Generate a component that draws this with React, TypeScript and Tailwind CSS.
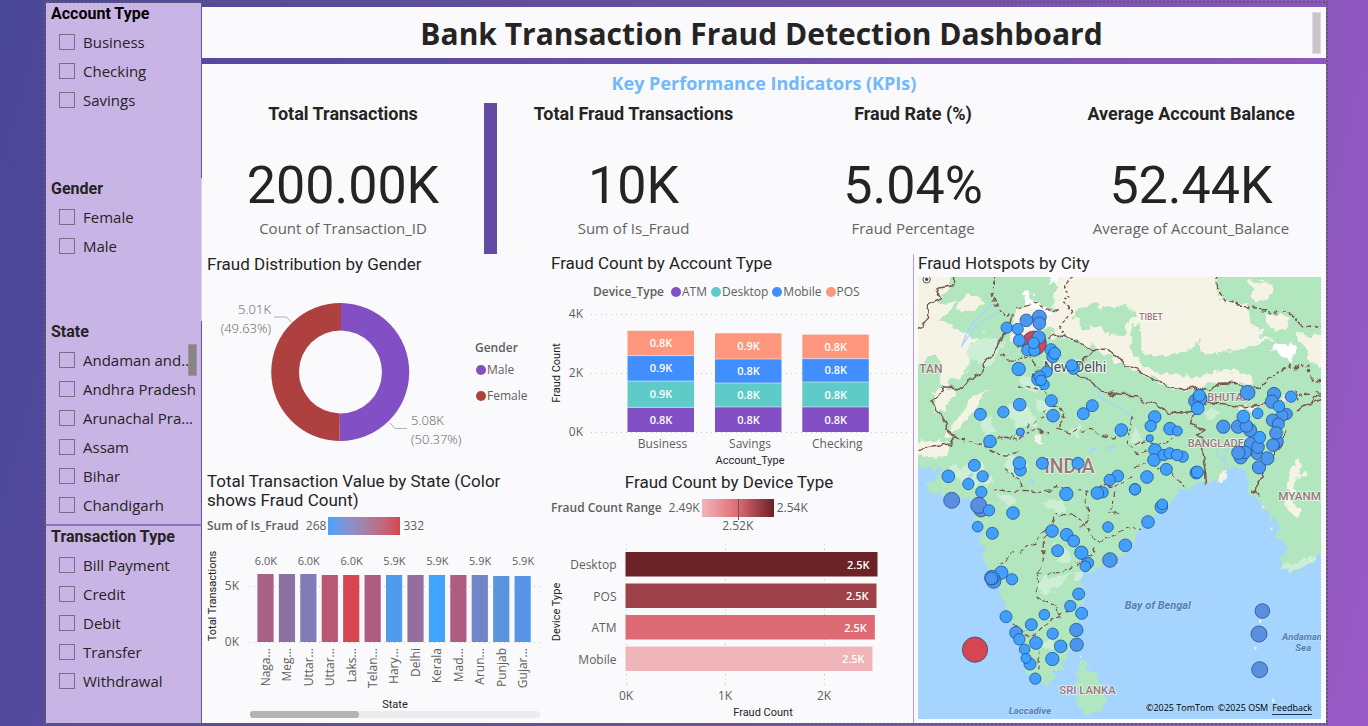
import React from "react";

const DIN = "font-[Roboto,'Liberation_Sans',sans-serif]";
const UI = "font-['Open_Sans','Noto_Sans',sans-serif]";

/* ---------- Slicers ---------- */

type SlicerProps = {
  title: string;
  items: string[];
  className: string;
  titleClass?: string;
  scrollbar?: boolean;
};

function Slicer({ title, items, className, titleClass = "text-[#252423]", scrollbar }: SlicerProps) {
  return (
    <fieldset className={`relative min-w-0 bg-[#c9b5e5] ${className}`}>
      <legend className={`float-left h-[21px] w-full pl-[5px] ${DIN} text-[16px] leading-[21px] font-bold ${titleClass}`}>
        {title}
      </legend>
      <ul className="clear-both pt-1">
        {items.map((item) => (
          <li key={item}>
            <label className="flex h-[29px] items-center gap-2 overflow-hidden pl-[13px] text-[15px] whitespace-nowrap text-[#252423]">
              <input
                type="checkbox"
                className="mb-[2px] size-4 shrink-0 appearance-none border border-[#7b6f87] checked:bg-[#5b4aa0]"
              />
              <span>{item}</span>
            </label>
          </li>
        ))}
      </ul>
      {scrollbar && <div className="absolute top-[23px] right-1 h-8 w-[9px] border border-[#9b949f] bg-[#888584]" />}
    </fieldset>
  );
}

function Sidebar() {
  return (
    <aside className="flex w-[156px] shrink-0 flex-col">
      <Slicer
        title="Account Type"
        titleClass="text-black"
        items={["Business", "Checking", "Savings"]}
        className="border-r border-[#6450a8] pb-[63px]"
      />
      <Slicer title="Gender" items={["Female", "Male"]} className="border-r border-[#d9cbee] pb-[60px]" />
      <Slicer
        title="State"
        items={["Andaman and...", "Andhra Pradesh", "Arunachal Pra...", "Assam", "Bihar", "Chandigarh"]}
        className="border-r border-[#6450a8] pb-1"
        scrollbar
      />
      <div className="h-[2px] bg-[#8b75c1]" />
      <Slicer
        title="Transaction Type"
        items={["Bill Payment", "Credit", "Debit", "Transfer", "Withdrawal"]}
        className="grow border-r border-[#6450a8]"
      />
    </aside>
  );
}

/* ---------- KPI cards ---------- */

function Kpi({ title, value, caption }: { title: string; value: string; caption: string }) {
  return (
    <section className="flex min-w-0 flex-col items-center bg-[#fafafd] text-center">
      <h3 className={`${DIN} text-[18px] leading-[22px] font-bold text-[#252423]`}>{title}</h3>
      <p className={`mt-[30px] ${DIN} text-[52px] leading-[62px] text-[#252423]`}>{value}</p>
      <p className="text-[15px] leading-[22px] text-[#666361]">{caption}</p>
    </section>
  );
}

/* ---------- Shared chart parts ---------- */

function ChartTitle({ children, className = "" }: { children: React.ReactNode; className?: string }) {
  return <h3 className={`${DIN} text-[17px] leading-[19px] text-[#252423] ${className}`}>{children}</h3>;
}

function Key({ color, label }: { color: string; label: string }) {
  return (
    <li className="flex items-center gap-px">
      <svg viewBox="0 0 10 10" className="size-[10px]">
        <circle cx="5" cy="5" r="5" fill={color} />
      </svg>
      {label}
    </li>
  );
}

/* ---------- Donut ---------- */

function GenderChart() {
  return (
    <section className="min-w-0 bg-[#fafafd] pt-[1px] pl-[5px]">
      <ChartTitle>Fraud Distribution by Gender</ChartTitle>
      <div className="flex">
        <svg viewBox="207 274 264 190" className="w-0 grow">
          <path d="M341 303 A69 69 0 1 1 339.4 441 L339.9 413.5 A41.5 41.5 0 1 0 341 330.5Z" fill="#8250c4" />
          <path d="M341 303 A69 69 0 0 0 339.4 441 L339.9 413.5 A41.5 41.5 0 0 1 341 330.5Z" fill="#ae4140" />
          <path d="M274 317 H286.500 L291 322 M390 423 L395 428.500 H407" fill="none" stroke="#b3b0ad" />
          <g className="fill-[#605e5c] text-[13px] font-light">
            <text x="271" y="314" textAnchor="end">5.01K</text>
            <text x="271" y="333" textAnchor="end">(49.63%)</text>
            <text x="411" y="425">5.08K</text>
            <text x="411" y="444">(50.37%)</text>
          </g>
        </svg>
        <div className="w-[75px] shrink-0 pt-[65px] pl-1 text-[12px] leading-[18px] text-[#605e5c]">
          <p className="font-semibold">Gender</p>
          <ul className="mt-1 flex flex-col gap-2 pl-[1px]">
            <Key color="#8250c4" label="Male" />
            <Key color="#ae4140" label="Female" />
          </ul>
        </div>
      </div>
    </section>
  );
}

/* ---------- State columns ---------- */

const states = [
  { name: "Naga...", color: "#a96085", top: 574, label: "6.0K" },
  { name: "Meg...", color: "#8d70a2", top: 574 },
  { name: "Uttar...", color: "#7f7cb6", top: 574, label: "6.0K" },
  { name: "Uttar...", color: "#b95873", top: 575 },
  { name: "Laks...", color: "#d64550", top: 575, label: "6.0K" },
  { name: "Telan...", color: "#ad5e80", top: 575 },
  { name: "Hary...", color: "#4f9bef", top: 575, label: "5.9K" },
  { name: "Delhi", color: "#966d9f", top: 575 },
  { name: "Kerala", color: "#41a4ff", top: 575, label: "5.9K" },
  { name: "Mad...", color: "#ad5e80", top: 575 },
  { name: "Arun...", color: "#7185c9", top: 575, label: "5.9K" },
  { name: "Punjab", color: "#5b93e0", top: 576 },
  { name: "Gujar...", color: "#5796e6", top: 576, label: "5.9K" },
];

function StateChart() {
  return (
    <section className="min-w-0 bg-[#fafafd] pt-[2px] pl-[5px]">
      <ChartTitle className="max-w-[300px]">Total Transaction Value by State (Color shows Fraud Count)</ChartTitle>
      <div className="mt-[7px] flex h-[18px] items-center text-[12px] text-[#605e5c]">
        <span className="mr-[7px] font-semibold">Sum of Is_Fraud</span>
        <span className="mr-[2px]">268</span>
        <span className="h-[18px] w-[72px] bg-linear-to-r from-[#41a4ff] to-[#d64550]" />
        <span className="ml-[3px]">332</span>
      </div>
      <svg viewBox="207 540 339 182" className="mt-[5px] w-full">
        <path d="M249 586.5 H541 M249 642.5 H541" stroke="#c8c6c4" strokeDasharray="1 4" />
        {states.map((s, i) => {
          const x = 257.4 + i * 21.43;
          return (
            <g key={i}>
              <rect x={x} y={s.top} width="16.2" height={642 - s.top} fill={s.color} />
              {s.label && (
                <text x={x + 8.5} y="565" textAnchor="middle" className="fill-[#605e5c] text-[11px]">{s.label}</text>
              )}
              <text transform={`translate(${x + 12.5} 648) rotate(-90)`} textAnchor="end" className="fill-[#605e5c] text-[12px]">
                {s.name}
              </text>
            </g>
          );
        })}
        <g className="fill-[#605e5c] text-[12px]">
          <text x="239" y="590" textAnchor="end">5K</text>
          <text x="239" y="646" textAnchor="end">0K</text>
        </g>
        <g className={`${DIN} fill-[#252423] text-[11px]`} textAnchor="middle">
          <text transform="translate(216 596) rotate(-90)">Total Transactions</text>
          <text x="395" y="708">State</text>
        </g>
        <rect x="250" y="711" width="290" height="7" rx="3" fill="#ececee" />
        <rect x="250" y="711" width="109" height="7" rx="3" fill="#b3b3b3" />
      </svg>
    </section>
  );
}

/* ---------- Account type stacked columns ---------- */

const deviceColors = ["#ff977e", "#418fff", "#5ecbc8", "#8250c4"];
const accounts = [
  { name: "Business", x: 627.5, edges: [330.5, 355.6, 381, 407.4, 432], labels: ["0.8K", "0.9K", "0.9K", "0.8K"] },
  { name: "Savings", x: 715, edges: [333, 359, 383, 407, 432], labels: ["0.9K", "0.8K", "0.8K", "0.8K"] },
  { name: "Checking", x: 802.3, edges: [334.3, 358.7, 382, 407, 432], labels: ["0.8K", "0.8K", "0.8K", "0.8K"] },
];

function AccountChart() {
  return (
    <section className="min-w-0 bg-[#fafafd] pl-[5px]">
      <ChartTitle>Fraud Count by Account Type</ChartTitle>
      <div className="mt-[10px] flex h-[18px] items-center pl-[42px] text-[12px] text-[#605e5c]">
        <span className="mr-[7px] font-semibold">Device_Type</span>
        <ul className="flex gap-1">
          <Key color="#8250c4" label="ATM" />
          <Key color="#5ecbc8" label="Desktop" />
          <Key color="#418fff" label="Mobile" />
          <Key color="#ff977e" label="POS" />
        </ul>
      </div>
      <svg viewBox="551 301 362 168" className="w-full">
        <path d="M591 314.500 H909 M591 373.500 H909 M591 432.500 H909" stroke="#c8c6c4" strokeDasharray="1 4" />
        {accounts.map((a) => (
          <g key={a.name} textAnchor="middle">
            {a.labels.map((label, i) => (
              <g key={i}>
                <rect x={a.x} y={a.edges[i]} width="66.5" height={a.edges[i + 1] - a.edges[i]} fill={deviceColors[i]} />
                <path d={`M${a.x} ${a.edges[i]} h66.500`} stroke="#ffffff" strokeOpacity="0.5" />
                <text x={a.x + 33.5} y={(a.edges[i] + a.edges[i + 1]) / 2 + 4} className="fill-white text-[11px] font-semibold">
                  {label}
                </text>
              </g>
            ))}
            <text x={a.x + 35} y="448" className="fill-[#605e5c] text-[12px]">{a.name}</text>
          </g>
        ))}
        <g className="fill-[#605e5c] text-[12px]" textAnchor="end">
          <text x="583" y="318">4K</text>
          <text x="583" y="377">2K</text>
          <text x="583" y="436">0K</text>
        </g>
        <g className={`${DIN} fill-[#252423] text-[11px]`} textAnchor="middle">
          <text transform="translate(560 373) rotate(-90)">Fraud Count</text>
          <text x="750" y="464">Account_Type</text>
        </g>
      </svg>
    </section>
  );
}

/* ---------- Device type bars ---------- */

const devices = [
  { name: "Desktop", y: 552, w: 252, color: "#6b2328" },
  { name: "POS", y: 583.5, w: 251, color: "#9d4249" },
  { name: "ATM", y: 615, w: 249.3, color: "#de6a73" },
  { name: "Mobile", y: 646.5, w: 247, color: "#efb5b9" },
];

function DeviceChart() {
  return (
    <section className="min-w-0 bg-[#fafafd] pt-[3px] pl-[5px]">
      <ChartTitle className="pr-[6px] text-center">Fraud Count by Device Type</ChartTitle>
      <div className="mt-[7px] flex h-[18px] items-center text-[12px] text-[#605e5c]">
        <span className="mr-[7px] font-semibold">Fraud Count Range</span>
        <span className="mr-[2px]">2.49K</span>
        <span className="relative h-[18px] w-[72px] bg-linear-to-r from-[#efb5b9] via-[#de6a73] to-[#6b2328]">
          <span className="absolute top-0 left-1/2 h-[21px] w-px bg-[#605e5c]" />
          <span className="absolute top-[18px] left-1/2 -translate-x-1/2 leading-[18px]">2.52K</span>
        </span>
        <span className="ml-[3px]">2.54K</span>
      </div>
      <svg viewBox="551 517 362 203" className="w-full">
        <path d="M626.500 544 V686 M725.500 544 V686 M824.500 544 V686" stroke="#c8c6c4" strokeDasharray="1 4" />
        {devices.map((d) => (
          <g key={d.name} textAnchor="end">
            <rect x="625.500" y={d.y} width={d.w} height="24.500" fill={d.color} />
            <text x={d.w + 617.5} y={d.y + 16.5} className="fill-white text-[11px] font-semibold">2.5K</text>
            <text x="616.500" y={d.y + 17} className="fill-[#605e5c] text-[12px]">{d.name}</text>
          </g>
        ))}
        <g className="fill-[#605e5c] text-[12px]" textAnchor="middle">
          <text x="626" y="700">0K</text>
          <text x="725" y="700">1K</text>
          <text x="824" y="700">2K</text>
        </g>
        <g className={`${DIN} fill-[#252423] text-[11px]`} textAnchor="middle">
          <text transform="translate(560 612) rotate(-90)">Device Type</text>
          <text x="763" y="716">Fraud Count</text>
        </g>
      </svg>
    </section>
  );
}

/* ---------- Map ---------- */

type Bubble = [x: number, y: number, r: number, tone?: 1 | 2 | 3];
const tones = ["#419fff", "#4b96ee", "#5a8fe0", "#d64550"];

const northWest: Bubble[] = [
  [366, 280, 38, 3], [382, 201, 22, 1], [343, 211, 20, 1], [382, 220, 20, 1], [284, 233, 18], [317, 237, 18],
  [322, 271, 19], [380, 262, 21, 1], [347, 300, 19], [367, 302, 18], [365, 279, 18], [417, 299, 19], [422, 320, 19],
  [428, 310, 19], [484, 355, 19], [479, 346, 18], [320, 357, 21], [404, 365, 18], [378, 388, 20], [383, 380, 18],
  [397, 404, 16], [387, 391, 17], [323, 464, 20], [274, 486, 18], [205, 493, 19], [418, 452, 19], [423, 497, 20],
  [514, 491, 19], [541, 467, 19], [325, 546, 13], [234, 574, 20], [628, 540, 20], [187, 646, 19], [212, 679, 18],
  [109, 679, 20], [169, 702, 18], [325, 660, 19], [322, 639, 20], [391, 640, 19], [498, 640, 19], [617, 678, 19],
  [593, 690, 18],
];

const northEast: Bubble[] = [
  [182, 453, 22, 1], [195, 446, 22, 1], [193, 436, 19], [188, 475, 20], [338, 428, 23, 1], [417, 432, 21, 1],
  [411, 455, 21, 1], [468, 440, 18], [455, 492, 18, 1], [441, 497, 19, 1], [432, 469, 18], [368, 490, 17],
  [413, 511, 20, 1], [430, 522, 19, 1], [265, 530, 21, 1], [309, 530, 21, 1], [345, 540, 21, 1], [334, 528, 20, 1],
  [325, 500, 20], [428, 574, 18, 1], [423, 549, 20, 1], [414, 585, 20, 1], [348, 582, 21, 1], [366, 612, 18, 1],
  [369, 591, 20, 1], [374, 562, 19], [317, 622, 21, 1], [330, 607, 20, 1], [310, 608, 21, 1], [372, 652, 21, 1],
  [397, 625, 21, 1], [59, 501, 20], [47, 528, 18], [105, 536, 20], [127, 543, 16], [44, 565, 12], [60, 600, 20],
  [57, 630, 20], [86, 615, 18], [104, 610, 18], [143, 620, 18], [126, 615, 18], [94, 658, 19], [36, 681, 20],
  [184, 668, 20], [187, 666, 19], [0, 718, 18],
];

const southWest: Bubble[] = [
  [208, 21, 18], [119, 46, 25, 2], [207, 75, 22, 2], [200, 61, 25, 2], [231, 76, 18], [303, 84, 20], [197, 125, 17],
  [241, 145, 19], [463, 27, 21], [572, 22, 18], [556, 24, 20], [669, 13, 18], [420, 138, 20], [464, 149, 20],
  [485, 168, 19], [437, 197, 19], [508, 203, 21], [528, 234, 18], [520, 244, 17], [594, 225, 23, 1], [588, 126, 17],
  [640, 181, 20], [268, 263, 21], [245, 288, 23, 1], [240, 278, 23, 1], [238, 280, 20, 1], [300, 283, 18],
  [282, 395, 19], [500, 327, 19], [475, 363, 18], [509, 385, 19], [397, 389, 17], [358, 419, 19], [312, 443, 20, 1],
  [322, 463, 18], [372, 474, 20], [422, 446, 18], [446, 484, 20], [338, 493, 17], [354, 537, 19], [342, 520, 16],
  [421, 522, 21], [493, 435, 21, 1], [494, 479, 21, 1], [370, 581, 18], [189, 494, 39, 3],
];

const southEast: Bubble[] = [
  [79, 66, 20], [82, 58, 17], [39, 111, 20], [382, 378, 23, 2], [372, 447, 25, 2], [374, 554, 25, 2],
];

function Bubbles({ items, transform }: { items: Bubble[]; transform: string }) {
  return (
    <g transform={transform} stroke="#1c4f8c" strokeOpacity="0.75" strokeWidth="3">
      {items.map(([cx, cy, r, tone = 0], i) => (
        <circle key={i} cx={cx} cy={cy} r={r - 1} fill={tones[tone]} />
      ))}
    </g>
  );
}

function IndiaMap() {
  return (
    <svg viewBox="0 0 1209 1326" className="w-full" role="img" aria-label="Map of fraud hotspots by city">
      <defs>
        <filter id="ragged" x="-5%" y="-5%" width="110%" height="110%" colorInterpolationFilters="sRGB">
          <feTurbulence type="fractalNoise" baseFrequency="0.035" numOctaves="3" seed="4" result="noise" />
          <feDisplacementMap in="SourceGraphic" in2="noise" scale="38" xChannelSelector="R" yChannelSelector="G" />
        </filter>
        <filter id="rough-line" x="-5%" y="-5%" width="110%" height="110%" colorInterpolationFilters="sRGB">
          <feTurbulence type="fractalNoise" baseFrequency="0.03" numOctaves="2" seed="9" result="noise" />
          <feDisplacementMap in="SourceGraphic" in2="noise" scale="30" xChannelSelector="R" yChannelSelector="G" />
        </filter>
      </defs>
      <rect width="1209" height="1326" fill="#a5d5ff" />
      <g filter="url(#ragged)">
        {/* mainland */}
        <path
          fill="#b2e6bf"
          d="M-50 -50H1260V815L1209 829 1171 854 1141 886 1086 879 1101 814 1081 764 1076 730 1061 734 1050 702 1031 684 1010 662 996 644 991 620 981 579 968 570 955 582 941 569 930 590 921 609 905 596 881 619 851 614 811 629 776 649 771 674 740 690 711 714 690 742 651 774 640 800 622 824 600 850 582 864 532 869 527 886 502 886 482 914 492 954 482 1014 492 1054 478 1080 462 1104 487 1124 457 1129 440 1150 422 1164 442 1169 402 1184 412 1199 382 1222 357 1214 327 1184 312 1134 292 1064 272 1024 252 954 222 914 197 844 187 764 172 724 162 679 137 669 120 655 92 664 60 655 42 644 22 624 52 606 72 572 40 574 -50 550Z"
        />
        {/* Sri Lanka */}
        <path fill="#b2e6bf" d="M487 1152 505 1160 522 1184 545 1215 557 1244 560 1274 545 1295 518 1310 497 1312 483 1290 477 1224 480 1184Z" />
        {/* arid regions */}
        <g fill="#f5f2e6">
          <path d="M-50 -50H107L100 40 60 60 75 85 110 70 92 105 70 130 120 150 160 175 205 190 182 205 150 195 170 240 150 270 130 300 75 330 60 300 80 265 45 240 20 250 -50 290Z" />
          <path d="M125 65 150 52 185 60 195 85 165 103 120 90Z" />
          <path d="M42 345 80 330 115 345 90 370 78 410 52 400Z M170 350 205 340 180 385 160 420 125 450 95 485 80 478 110 440 130 405Z M-50 500 60 490 105 505 90 530 55 545 20 532 -50 540Z" />
          <path d="M430 -50H896L895 35 915 65 985 85 990 130 1010 150 1035 165 1020 185 1080 190 1000 205 960 225 900 222 880 262 840 250 845 215 790 230 740 235 700 245 670 220 665 175 651 130 640 205 655 240 700 285 780 290 850 300 900 280 960 285 1010 300 1000 325 960 315 920 320 860 325 800 345 740 325 700 300 651 275 600 262 545 218 500 200 430 180 400 145 395 110 410 60Z" />
          <path d="M991 10 1040 12 1072 28 1050 60 1020 75 990 52 1010 40Z M1045 115 1090 108 1112 130 1105 155 1065 158 1048 140Z M1140 165 1175 180 1260 160V275L1180 260 1165 215 1140 190Z" />
          <path d="M300 95 350 80 420 115 440 150 405 190 395 150 345 175 285 190 278 160Z M960 390 1030 385 1010 410 980 405Z M1095 350 1120 355 1110 385 1090 375Z" />
          <path d="M1136 540 1160 590 1150 605 1125 615 1118 660 1130 690 1145 705 1140 720 1115 705 1108 670 1112 600Z M908 590 930 588 920 614 905 610Z M360 470 380 505 350 500Z" />
        </g>
        <g fill="#b2e6bf">
          <path d="M480 95 530 80 585 95 640 85 655 120 610 145 625 175 575 170 545 150 490 150 470 120Z" />
          <path d="M700 240 770 245 800 220 845 190 850 225 940 235 1020 215 1100 190 1110 270 1020 280 960 275 890 265 800 290 740 275 700 270Z" />
        </g>
        {/* snow and ice */}
        <path fill="#ffffff" d="M312 48 328 42 340 60 352 75 375 90 400 110 385 125 355 100 330 80Z M1052 215 1070 202 1125 200 1132 225 1125 260 1110 240 1082 235 1072 222Z M385 -20 425 -20 420 22 398 14Z" />
        {/* pale lowlands */}
        <g fill="#cdefd5">
          <path d="M140 215 200 170 260 190 240 240 200 270 170 250Z M270 395 310 360 330 390 360 440 300 455Z M185 435 215 420 240 470 200 475Z M350 370 410 375 395 410 360 405Z M300 310 360 290 380 330 340 345Z M265 525 310 540 340 580 290 600 262 570Z M100 570 190 560 230 620 170 630 120 610Z" />
          <path d="M240 645 290 660 275 690 245 680Z M380 660 445 675 450 715 410 705 370 680Z M425 800 455 830 448 862 410 852 400 815Z M372 905 460 890 430 925 385 950 355 935Z M460 890 500 880 490 908 465 900Z M370 1100 400 1085 415 1110 385 1125Z M645 440 672 480 665 510 640 490Z M870 400 900 395 895 425 865 420Z M450 460 490 440 480 490Z M1094 862 1120 865 1150 850 1195 832 1165 870 1120 888 1090 880Z M1125 595 1145 600 1135 615Z" />
        </g>
      </g>
      {/* rivers and lakes */}
      <g fill="none" stroke="#a5d5ff" strokeWidth="4">
        <path d="M130 210 150 160 170 130 210 95 220 80 M130 210 170 150 240 105 M532 320 545 360 600 390 650 425 M890 480 895 530 925 560 935 600 M935 500 915 550" />
        <path d="M515 520 535 515 M570 515 590 510 M340 605 345 620 M150 605 165 590" strokeWidth="9" />
      </g>
      <g filter="url(#rough-line)">
        {/* national borders */}
        <g fill="none" stroke="#775551" strokeWidth="4.500" strokeLinejoin="round">
          <path d="M107 -20 107 26 57 34 72 64 32 84 27 134 12 154 -20 149" />
          <path d="M287 124 282 144 252 184 222 229 207 244 182 289 160 312 132 334 80 329 60 345 42 374 50 400 67 409 85 440 92 455 107 489 97 504 60 508 -20 516" />
          <path d="M382 181 412 174 425 180 452 184 482 195 500 212 522 222 545 214 565 214 597 239 622 269 651 272 681 294 731 324 801 339 851 329 876 344 901 319 921 318 961 324 1021 329" />
          <path d="M522 222 497 249 472 285 502 304 552 339 602 354 651 356 691 374 751 404 801 409 830 405" />
          <path d="M860 368 891 384 951 389 1000 384 1051 380 M831 410 820 440 838 452 861 459 831 479 851 480 851 519 866 614 M1106 459 1076 529 1041 559 1036 600 1021 610 1018 655 M1136 399 1181 379 1230 358 M1180 379 1195 355 1230 350 M999 640 1018 642" />
        </g>
        {/* disputed and state borders */}
        <g fill="none" stroke="#775551" strokeLinejoin="round" strokeWidth="4" strokeDasharray="14 9">
          <path strokeWidth="6" strokeDasharray="8 8" d="M225 0 225 40 235 80 250 105 287 120 M460 0 440 20 455 60 435 80 465 105 440 130 430 160 450 184" />
          <path strokeWidth="5" d="M896 0 900 40 925 72 970 82 1010 92 1080 110 1105 103 1135 130 1155 150 1180 148 1230 135" />
          <path strokeWidth="6" strokeDasharray="10 9" d="M1021 335 1050 310 1080 280 1110 270 1170 265 1180 300 1230 320" />
          <path d="M300 90 345 75 375 90 420 110 M287 190 340 240 360 270 340 310 M250 240 295 245 345 240 M300 330 350 330 385 345 400 390 430 395 440 420 420 450 450 465 520 460 580 480 610 465" />
          <path d="M107 489 160 492 205 510 260 540 300 520 M245 490 300 470 350 440 385 395 M260 480 300 490 340 460 390 470 M255 575 290 590 310 630" />
          <path d="M222 640 260 645 320 640 360 645 430 632 500 640 540 632 590 620 650 600 M500 640 505 680 515 730 480 750 M650 425 630 470 625 500 660 530 690 520 730 500 760 480" />
          <path d="M240 860 290 830 335 810 370 770 400 740 415 712 440 715 480 725 515 760 530 790 590 775 640 745 672 755 M380 776 378 820 375 860 360 890 350 930 358 975 M360 885 430 880 480 860 520 840 540 805 M590 640 583 700 600 715 570 710" />
          <path d="M358 960 380 975 415 985 425 1015 380 1040 340 1080 290 1040 M340 1080 365 1120 362 1180 M420 1010 455 1000 M651 500 690 495 720 505 M651 570 700 560 760 590 800 630 M1060 385 1100 360 1160 350 1230 345 M1130 340 1145 370" />
        </g>
      </g>
      {/* place names */}
      <g fontFamily="Roboto, 'Liberation Sans', sans-serif" stroke="#ffffff" strokeOpacity="0.7" strokeWidth="5" paintOrder="stroke" strokeLinejoin="round">
        <g fill="#9a7579" fontWeight="500">
          <text x="4" y="288" fontSize="36">TAN</text>
          <text x="664" y="130" fontSize="26">TIBET</text>
          <text x="868" y="371" fontSize="33">BHUTAN</text>
          <text x="809" y="509" fontSize="33">BANGLADESH</text>
          <text x="379" y="588" fontSize="58">INDIA</text>
          <text x="1081" y="669" fontSize="35">MYANM</text>
          <text x="424" y="1250" fontSize="34">SRI LANKA</text>
        </g>
        <g fill="#5680b0" fontWeight="700" fontStyle="italic" strokeOpacity="0.15">
          <text x="620" y="996" fontSize="33">Bay of Bengal</text>
          <text x="1092" y="1089" fontSize="29">Andaman</text>
          <text x="1132" y="1122" fontSize="29">Sea</text>
          <text x="272" y="1312" fontSize="29">Laccadive</text>
        </g>
        <text x="377" y="284" fontSize="42" fill="#4f4f55" strokeWidth="7">New Delhi</text>
      </g>
      {/* islands */}
      <path fill="#f5f2e6" d="M1021 1033 1030 1026 1028 1040Z M1010 1110h5v8h-5Z M1064 1262l6 8-3 8-5-6Z M1031 684l10 8-8 2Z M1058 752h6v7h-6Z M484 1134l8 4-6 4Z" />
      <Bubbles items={northWest} transform="translate(-18 -81)" />
      <Bubbles items={northEast} transform="translate(651 -81)" />
      <Bubbles items={southWest} transform="translate(-18 624)" />
      <Bubbles items={southEast} transform="translate(651 624)" />
      {/* compass button */}
      <g fill="none" stroke="#55595c" strokeWidth="3">
        <circle cx="26" cy="7" r="11" fill="#ffffff" fillOpacity="0.6" />
        <circle cx="26" cy="7" r="4" fill="#333333" />
      </g>
    </svg>
  );
}

function HotspotMap() {
  return (
    <section className="min-w-0 border-l border-[#b39ad9] bg-[#fafafd] pr-[5px] pl-1">
      <ChartTitle>Fraud Hotspots by City</ChartTitle>
      <div className="relative mt-1">
        <IndiaMap />
        <p className="absolute right-[9px] bottom-1 flex gap-1 text-[9px] leading-[12px] text-black">
          <span>©2025 TomTom</span>
          <span>©2025 OSM</span>
          <a href="#feedback" className="border-b border-[#1d3c63]">Feedback</a>
        </p>
      </div>
    </section>
  );
}

/* ---------- Page ---------- */

export default function App() {
  return (
    <div className={`min-h-screen bg-linear-[105deg] from-[#4a4796] via-[#6c4eac] to-[#995ac6] pt-px pr-[40px] pb-px pl-[44px] ${UI}`}>
      <div className="flex min-h-[724px] border-2 border-dotted border-[#5f5d63]">
        <Sidebar />
        <main className="flex min-w-0 grow flex-col">
          <header className="mt-1 flex h-[51px] items-center bg-[#fafafd] pr-[5px]">
            <h1 className="grow pt-[3px] pl-[9px] text-center text-[30px] leading-[40px] font-bold text-[#252423]">
              Bank Transaction Fraud Detection Dashboard
            </h1>
            <div className="h-[42px] w-[9px] border border-[#dddddf] bg-[#c8c6c8]" />
          </header>
          <section className="mt-[6px] bg-[#fafafd]">
            <h2 className="h-[39px] pt-[7px] text-center text-[18px] leading-[24px] font-bold text-[#70b8ff]">
              Key Performance Indicators (KPIs)
            </h2>
            <div className="grid h-[151px] grid-cols-[282fr_13px_273fr_286fr_270fr]">
              <Kpi title="Total Transactions" value="200.00K" caption="Count of Transaction_ID" />
              <div className="bg-[#624ba3]" />
              <Kpi title="Total Fraud Transactions" value="10K" caption="Sum of Is_Fraud" />
              <Kpi title="Fraud Rate (%)" value="5.04%" caption="Fraud Percentage" />
              <Kpi title="Average Account Balance" value="52.44K" caption="Average of Account_Balance" />
            </div>
          </section>
          <div className="grid grow grid-cols-[344fr_367fr_413fr]">
            <div className="grid min-w-0 grid-rows-[216fr_253fr]">
              <GenderChart />
              <StateChart />
            </div>
            <div className="grid min-w-0 grid-rows-[216fr_253fr]">
              <AccountChart />
              <DeviceChart />
            </div>
            <HotspotMap />
          </div>
        </main>
      </div>
    </div>
  );
}
